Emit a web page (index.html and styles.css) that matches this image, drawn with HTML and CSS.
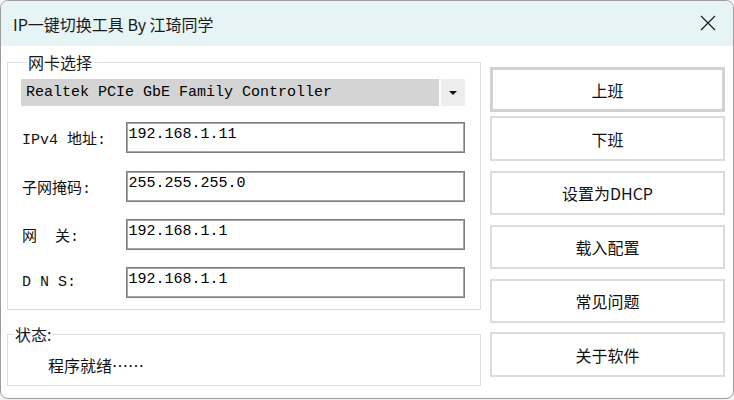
FILE: index.html
```html
<!DOCTYPE html>
<html lang="zh-CN">
<head>
  <meta charset="UTF-8">
  <title>IP一键切换工具</title>
  <link rel="stylesheet" href="styles.css">
</head>
<body>
  <div class="window">
    <div class="titlebar">
      <span class="title">IP一键切换工具 By 江琦同学</span>
      <svg class="close" width="16" height="16" viewBox="0 0 16 16">
        <path d="M1 1 L15 15 M15 1 L1 15" stroke="#1a1a1a" stroke-width="1.2" fill="none"/>
      </svg>
    </div>
    <div class="content">
      <div class="left">
        <fieldset class="group nic">
          <legend>网卡选择</legend>
          <div class="combo">
            <span class="combo-text">Realtek PCIe GbE Family Controller</span>
            <span class="combo-arrow"><span class="tri"></span></span>
          </div>
          <div class="row">
            <label class="lbl">IPv4 地址:</label>
            <input class="field" type="text" value="192.168.1.11">
          </div>
          <div class="row">
            <label class="lbl">子网掩码:</label>
            <input class="field" type="text" value="255.255.255.0">
          </div>
          <div class="row">
            <label class="lbl">网&nbsp;&nbsp;关:</label>
            <input class="field" type="text" value="192.168.1.1">
          </div>
          <div class="row dns">
            <label class="lbl">D N S:</label>
            <input class="field" type="text" value="192.168.1.1">
          </div>
        </fieldset>
        <fieldset class="group status">
          <legend>状态:</legend>
          <p class="status-text">程序就绪……</p>
        </fieldset>
      </div>
      <div class="buttons">
        <button class="btn default">上班</button>
        <button class="btn">下班</button>
        <button class="btn">设置为DHCP</button>
        <button class="btn">载入配置</button>
        <button class="btn">常见问题</button>
        <button class="btn">关于软件</button>
      </div>
    </div>
  </div>
</body>
</html>
```

FILE: styles.css
```css
html, body { margin: 0; padding: 0; background: #f3f3f3; }
body { font-family: "Noto Sans CJK SC", "Noto Sans", sans-serif; color: #000; }

.window { width: 732px; height: 397px; border: 1px solid #9c9c9c; border-radius: 8px; background: #fff; overflow: hidden; display: flex; flex-direction: column; }
.titlebar { height: 45px; background: #e7f4f6; display: flex; align-items: center; justify-content: space-between; padding: 0 17px 0 12px; flex-shrink: 0; }
.title { font-size: 16px; line-height: 20px; color: #1a1a1a; }
.close { display: block; margin-top: -1px; }

.content { display: flex; padding: 0 0 0 6px; }
.left { width: 474px; display: flex; flex-direction: column; }
.buttons { width: 235px; margin-left: 9px; padding-top: 21px; display: flex; flex-direction: column; }

.group { margin: 0; border: 1px solid #dedede; padding: 0; min-width: 0; }
.group legend { font-size: 16px; line-height: 20px; padding: 0 2px 0 1px; margin-left: 6px; color: #1a1a1a; }
.nic { padding: 7px 15px 11px 13px; margin-top: 6px; }
.status { margin-top: 14px; padding-bottom: 9px; }

.combo { display: flex; height: 27px; }
.combo-text { flex: 1; background: #d4d4d4; font-family: "Liberation Mono", monospace; font-size: 15px; line-height: 27px; padding-left: 5px; white-space: nowrap; }
.combo-arrow { width: 24px; margin-left: 2px; background: #ededed; display: flex; align-items: center; justify-content: center; }
.tri { width: 0; height: 0; border-left: 4px solid transparent; border-right: 4px solid transparent; border-top: 4px solid #111; }

.row { display: flex; align-items: center; margin-top: 16px; margin-left: 1px; }
.row + .row { margin-top: 18px; }
.row + .row + .row { margin-top: 17px; }
.row.dns { margin-top: 20px; }
.lbl { width: 104px; font-family: "Liberation Mono", "Noto Sans CJK SC", monospace; font-size: 15px; color: #111; }
.field { width: 335px; height: 23px; box-sizing: content-box; padding: 0 2px 6px; margin: 0; border: 1px solid #7c7c7c; box-shadow: inset 0 0 0 1px #a8a8a8; font-family: "Liberation Mono", monospace; font-size: 15px; color: #000; outline: none; }

.status-text { margin: 10px 0 0 40px; font-size: 16px; line-height: 22px; color: #111; }

.btn { height: 45px; margin: 0 0 4px 0; background: #fff; border: 2px solid #dcdcdc; font-family: "Noto Sans CJK SC", sans-serif; font-size: 16px; color: #111; padding: 0; }
.btn.default { border: 3px solid #d2d2d2; }
.btn:nth-child(2) { margin-bottom: 10px; }
.btn:nth-child(3), .btn:nth-child(4), .btn:nth-child(5) { height: 44px; margin-bottom: 10px; }
.btn:nth-child(5) { margin-bottom: 9px; }
```
